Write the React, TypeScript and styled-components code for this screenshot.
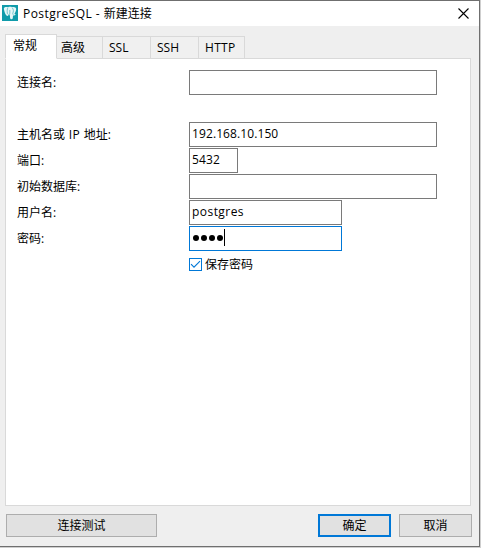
import React from 'react';
import styled, { createGlobalStyle } from 'styled-components';

const Global = createGlobalStyle`
  * { box-sizing: border-box; }
  body { margin: 0; background: #cfcfcf; overflow: hidden; }
  button, input { font: inherit; }
`;

const Dialog = styled.div`
  width: 480px;
  height: 547px;
  display: flex;
  flex-direction: column;
  border: 1px solid #6f6f6f;
  border-left: 0;
  background: #efefef;
  color: #000;
  font-family: 'Open Sans', 'Noto Sans CJK SC', sans-serif;
  font-size: 12px;
  line-height: 16px;
`;

const TitleBar = styled.header`
  height: 25px;
  flex: none;
  display: flex;
  align-items: center;
  padding: 0 10px 0 2px;
  background: #fff;
`;

const Title = styled.span`
  flex: 1;
  margin-left: 5px;
  white-space: pre;
`;

const Latin = styled.span<{ $gap: number }>`
  letter-spacing: ${p => p.$gap}px;
`;

const CloseButton = styled.button`
  width: 11px;
  height: 11px;
  padding: 0;
  border: 0;
  background: none;
  display: flex;
`;

const Tabs = styled.nav`
  display: flex;
  align-items: flex-end;
  height: 25px;
  margin: 8px 0 -1px 5px;
  flex: none;
  z-index: 1;
`;

const Tab = styled.div<{ $width: number; $inset?: number; $active?: boolean }>`
  width: ${p => p.$width}px;
  height: ${p => (p.$active ? 25 : 23)}px;
  padding: 3px 0 0 ${p => p.$inset ?? 6}px;
  border: 1px solid #d9d9d9;
  border-left-width: ${p => (p.$active ? 1 : 0)}px;
  border-bottom-color: ${p => (p.$active ? '#fff' : '#d9d9d9')};
  background: ${p => (p.$active ? '#fff' : '#f0f0f0')};
`;

const Panel = styled.main`
  width: 466px;
  height: 448px;
  margin-left: 5px;
  padding: 11px;
  flex: none;
  border: 1px solid #d9d9d9;
  background: #fff;
`;

const Row = styled.label<{ $after?: number }>`
  display: flex;
  height: 25px;
  margin-bottom: ${p => p.$after ?? 1}px;
`;

const Caption = styled.span`
  width: 172px;
  padding-top: 5px;
`;

const Field = styled.input<{ $width?: number; $gap?: number }>`
  width: ${p => p.$width ?? 248}px;
  height: 25px;
  padding: 0 2px 2px;
  border: 1px solid #7a7a7a;
  border-radius: 0;
  outline: none;
  background: #fff;
  color: #000;
  letter-spacing: ${p => p.$gap ?? 0.1}px;
`;

const PasswordField = styled.div`
  width: 153px;
  height: 25px;
  padding: 0 0 2px 3px;
  display: flex;
  align-items: center;
  border: 1px solid #0078d7;
`;

const Dot = styled.i`
  width: 6px;
  height: 6px;
  margin: 1px 2px 0 0;
  border-radius: 50%;
  background: #000;
`;

const Caret = styled.i`
  width: 1px;
  height: 17px;
  margin-left: -1px;
  background: #000;
`;

const SaveOption = styled.div`
  display: flex;
  align-items: center;
  height: 15px;
  margin: 6px 0 0 172px;
  gap: 3px;
`;

const SaveLabel = styled.span`
  padding-top: 1px;
`;

const CheckBox = styled.span`
  width: 13px;
  height: 13px;
  border: 1px solid #0078d7;
  display: flex;
`;

const Footer = styled.footer`
  display: flex;
  gap: 8px;
  margin: 8px 7px 0 6px;
`;

const Button = styled.button<{ $width: number; $primary?: boolean; $pushRight?: boolean }>`
  width: ${p => p.$width}px;
  height: 23px;
  margin: 0 ${p => (p.$pushRight ? 'auto' : '0')} 0 0;
  padding: 0;
  border: ${p => (p.$primary ? '2px solid #0078d7' : '1px solid #adadad')};
  border-radius: 0;
  background: #e1e1e1;
  color: #000;
  line-height: 16px;
`;

const IconFrame = styled.span`
  display: flex;
  margin-bottom: 1px;
`;

const ElephantIcon = () => (
  <IconFrame>
    <svg width="16" height="16" viewBox="0 0 16 16">
      <rect width="16" height="16" fill="#109baa" />
      <path
        d="M1.8 3.4C2.4 1.8 4.4 1.6 6 2.2C7.4 1.6 9 1.7 10 2.2C12 1.5 14.2 2.3 14.2 4.1C14.1 6 13.1 7.8 12.4 9L13.8 9.4C13 10.4 11.8 10.5 11 10.4L10.8 13.2C10.4 14.7 8.3 14.5 8.1 13L7.9 10.2L6.7 10L5.6 11.1C3.7 10.6 2.3 6.7 1.8 3.4Z"
        fill="#e6f6f7"
      />
      <path
        d="M5.9 2.7C5 4.2 5.2 6 5.3 8.3L6.5 9.7M10.3 2.8C11.6 4.6 11.7 6.4 10.7 8.5M7.8 5V8L7.5 9.8M10.8 8.5L11.2 9.8"
        fill="none"
        stroke="#4fb5bf"
        strokeWidth="0.75"
      />
    </svg>
  </IconFrame>
);

export default function App() {
  return (
    <>
      <Global />
      <Dialog>
        <TitleBar>
          <ElephantIcon />
          <Title><Latin $gap={0.45}>PostgreSQL - </Latin>新建连接</Title>
          <CloseButton aria-label="关闭">
            <svg width="11" height="11" viewBox="0 0 11 11">
              <path d="M.5.5L10.5 10.5M10.5.5L.5 10.5" stroke="#000" strokeWidth="1.1" />
            </svg>
          </CloseButton>
        </TitleBar>
        <Tabs>
          <Tab $width={52} $inset={7} $active>常规</Tab>
          <Tab $width={46} $inset={4}>高级</Tab>
          <Tab $width={48}>SSL</Tab>
          <Tab $width={48}>SSH</Tab>
          <Tab $width={46}><Latin $gap={0.3}>HTTP</Latin></Tab>
        </Tabs>
        <Panel>
          <Row $after={27}><Caption>连接名:</Caption><Field /></Row>
          <Row>
            <Caption>主机名或<Latin $gap={0.5}> IP </Latin>地址:</Caption>
            <Field defaultValue="192.168.10.150" />
          </Row>
          <Row><Caption>端口:</Caption><Field $width={49} defaultValue="5432" /></Row>
          <Row><Caption>初始数据库:</Caption><Field /></Row>
          <Row><Caption>用户名:</Caption><Field $width={153} $gap={0.45} defaultValue="postgres" /></Row>
          <Row>
            <Caption>密码:</Caption>
            <PasswordField><Dot /><Dot /><Dot /><Dot /><Caret /></PasswordField>
          </Row>
          <SaveOption>
            <CheckBox>
              <svg width="11" height="11" viewBox="0 0 11 11">
                <path d="M1 5.2L4 8.2L10 2.2" fill="none" stroke="#0078d7" strokeWidth="1.1" />
              </svg>
            </CheckBox>
            <SaveLabel>保存密码</SaveLabel>
          </SaveOption>
        </Panel>
        <Footer>
          <Button $width={151} $pushRight>连接测试</Button>
          <Button $width={73} $primary>确定</Button>
          <Button $width={73}>取消</Button>
        </Footer>
      </Dialog>
    </>
  );
}
